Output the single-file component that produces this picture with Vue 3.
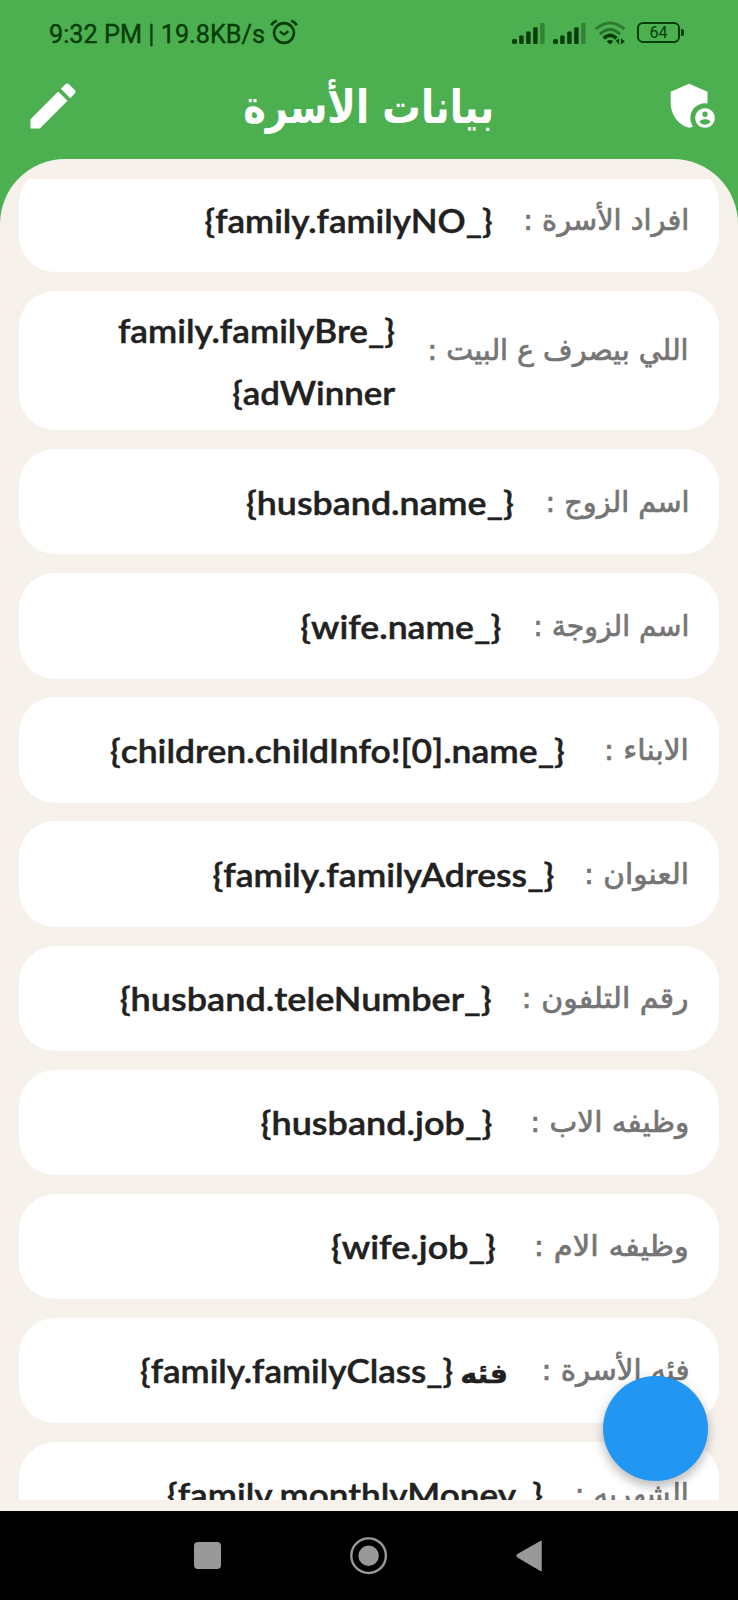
<script setup>
const rows = [
  { label: 'افراد الأسرة :', lw: 166, gap: 30, lines: [{ t: '{_family.familyNO}', w: 288 }] },
  { label: 'اللي بيصرف ع البيت :', lw: 261, gap: 33, tall: true, lines: [{ t: '{_family.familyBre', w: 277 }, { t: 'adWinner}', w: 163 }] },
  { label: 'اسم الزوج :', lw: 144, gap: 31, lines: [{ t: '{_husband.name}', w: 268 }] },
  { label: 'اسم الزوجة :', lw: 156, gap: 32, lines: [{ t: '{_wife.name}', w: 201 }] },
  { label: 'الابناء :', lw: 85, gap: 39, lines: [{ t: '{_children.childInfo![0].name}', w: 455 }] },
  { label: 'العنوان :', lw: 105, gap: 30, lines: [{ t: '{_family.familyAdress}', w: 342 }] },
  { label: 'رقم التلفون :', lw: 167, gap: 30, lines: [{ t: '{_husband.teleNumber}', w: 372 }] },
  { label: 'وظيفه الاب :', lw: 159, gap: 38, lines: [{ t: '{_husband.job}', w: 232 }] },
  { label: 'وظيفه الام :', lw: 155, gap: 38, lines: [{ t: '{_wife.job}', w: 165 }] },
  { label: 'فئه الأسرة :', lw: 148, gap: 33, lines: [{ prefix: 'فئه', t: '{_family.familyClass}', w: 368 }] },
  { label: 'الشهريه :', lw: 114, gap: 32, lines: [{ t: '{_family.monthlyMoney}', w: 376 }] },
]

// Scales a text run horizontally so that it fills its column exactly.
const vFit = {
  mounted(el, { value }) {
    const natural = el.getBoundingClientRect().width
    if (natural) el.style.transform = `scaleX(${value / natural})`
  },
}
</script>

<template>
  <div class="screen">
    <header class="top">
      <div class="status">
        <div class="status-left">
          <span class="clock"><span v-fit="216" class="fit ltr">9:32 PM | 19.8KB/s</span></span>
          <svg class="alarm" width="28" height="26" viewBox="0 0 28 26" fill="none" stroke="#083c0b">
            <circle cx="14" cy="14" r="9.9" stroke-width="2.6" />
            <path d="M1.4 6.4Q2.8 3.2 6.8 1.8M26.6 6.4Q25.2 3.2 21.2 1.8" stroke-width="2.6" />
            <path d="M9.8 12.4 13.8 15.6 18.4 12.2" stroke-width="2.4" />
          </svg>
        </div>
        <div class="status-right">
          <svg v-for="n in 2" :key="n" class="bars" width="33" height="22" viewBox="0 0 33 22" fill="#083c0b">
            <rect x="0" y="16" width="5" height="5" rx="1.8" />
            <rect x="7.2" y="12.4" width="4.4" height="8.6" rx="1" />
            <rect x="14.2" y="8.6" width="4.4" height="12.4" rx="1" />
            <rect x="21.2" y="4.2" width="4.4" height="16.8" rx="1" />
            <rect x="28.2" y="0" width="4.4" height="21" rx="1" opacity=".38" />
          </svg>
          <svg class="wifi" width="33" height="25" viewBox="0 0 33 25" fill="none" stroke="#083c0b">
            <path d="M1.5 8.2Q16 -4.2 30.5 8.2" stroke-width="3" opacity=".45" />
            <path d="M6 13.2Q16 3.8 26 13.2" stroke-width="3" opacity=".55" />
            <path d="M9.8 17.4Q16 11.2 22.4 17.4" stroke-width="3.6" />
            <path d="M12.6 20.2Q16 17.6 19.4 20.2L16 23.4Z" fill="#083c0b" stroke="none" />
            <path d="M25.2 17.2V23.4L21.6 19.8ZM27 17.2V23.4L30.8 20.6Z" fill="#083c0b" stroke="none" />
          </svg>
          <div class="battery"><span class="cell">64</span><i class="tip"></i></div>
        </div>
      </div>
      <div class="bar">
        <svg class="pencil" width="60" height="60" viewBox="0 0 24 24" fill="#fff">
          <path d="M3 17.25V21h3.75L17.81 9.94l-3.75-3.75L3 17.25zM20.71 7.04c.39-.39.39-1.02 0-1.41l-2.34-2.34c-.39-.39-1.02-.39-1.41 0l-1.83 1.83 3.75 3.75 1.83-1.83z" />
        </svg>
        <h1 class="title"><span v-fit="251" class="fit">بيانات الأسرة</span></h1>
        <svg class="shield" width="49" height="49" viewBox="2.5 1.5 20 20" fill="#fff">
          <path fill-rule="evenodd" d="M17 11c.34 0 .67.04 1 .09V6.27L10.5 3 3 6.27v4.91c0 4.54 3.2 8.79 7.5 9.82.55-.13 1.08-.32 1.6-.55-.69-.98-1.1-2.17-1.1-3.45 0-3.31 2.69-6 6-6zM17 13c-2.21 0-4 1.79-4 4s1.79 4 4 4 4-1.79 4-4-1.79-4-4-4zm0 1.38c.62 0 1.12.51 1.12 1.12s-.51 1.12-1.12 1.12-1.12-.51-1.12-1.12.5-1.12 1.12-1.12zm0 5.37c-.93 0-1.74-.46-2.24-1.17.05-.72 1.51-1.08 2.24-1.08s2.19.36 2.24 1.08c-.5.71-1.31 1.17-2.24 1.17z" />
        </svg>
      </div>
    </header>

    <main class="panel">
      <div class="list">
        <section v-for="row in rows" :key="row.label" class="card" :class="{ tall: row.tall }">
          <div class="label" :style="{ width: row.lw + 'px', marginLeft: row.gap + 'px' }">
            <span v-fit="row.lw" class="fit">{{ row.label }}</span>
          </div>
          <div class="value">
            <div v-for="line in row.lines" :key="line.t" class="line">
              <span v-fit="line.w" class="fit"><span v-if="line.prefix" class="prefix">{{ line.prefix }}&nbsp;</span>{{ line.t }}</span>
            </div>
          </div>
        </section>
      </div>
      <button class="fab"></button>
    </main>

    <nav class="nav">
      <svg width="738" height="89" viewBox="0 0 738 89" fill="#999">
        <rect x="194" y="31" width="27" height="27" rx="4" />
        <circle cx="368.6" cy="44.7" r="17.3" fill="none" stroke="#999" stroke-width="2.4" />
        <circle cx="368.6" cy="44.7" r="10.2" />
        <path d="M541.2 30V60L517.4 46Q515.8 44.7 517.4 43.5Z" stroke="#999" stroke-linejoin="round" />
      </svg>
    </nav>
  </div>
</template>

<style>
html,
body {
  margin: 0;
  background: #4caf50;
}
</style>

<style scoped>
.screen {
  width: 738px;
  height: 1600px;
  display: flex;
  flex-direction: column;
  overflow: hidden;
  background: #4caf50;
  font-family: Lato, "DejaVu Sans", sans-serif;
}
.fit {
  display: inline-block;
  white-space: nowrap;
  transform-origin: right center;
}
.fit.ltr {
  transform-origin: left center;
}
.top {
  height: 159px;
  flex: none;
}
.status {
  height: 68px;
  display: flex;
  justify-content: space-between;
  color: #083c0b;
}
.status-left,
.status-right {
  display: flex;
  align-items: flex-start;
}
.status-left {
  padding-left: 49px;
}
.clock {
  width: 216px;
  margin-top: 20px;
  font: 400 25px/30px Roboto, sans-serif;
  -webkit-text-stroke: .35px #083c0b;
}
.alarm {
  margin: 19px 0 0 5px;
}
.status-right {
  padding-right: 54px;
}
.bars {
  margin: 23px 8px 0 0;
}
.wifi {
  margin: 21px 10px 0 0;
}
.battery {
  display: flex;
  align-items: center;
  margin-top: 22px;
}
.cell {
  box-sizing: border-box;
  width: 43px;
  height: 21px;
  border: 2px solid #083c0b;
  border-radius: 6px;
  font: 400 16px/18px Roboto, sans-serif;
  text-align: center;
}
.tip {
  width: 3px;
  height: 7px;
  margin-left: 1px;
  border-radius: 0 2px 2px 0;
  background: #083c0b;
}
.bar {
  display: flex;
  align-items: flex-start;
}
.pencil {
  flex: none;
  margin: 8px 0 0 23px;
}
.title {
  direction: rtl;
  flex: none;
  width: 251px;
  margin: 3px 175px 0 160px;
  color: #fff;
  font: 700 46px/72px "DejaVu Sans", sans-serif;
}
.shield {
  flex: none;
  margin: 12px 0 0;
  width: 50px;
  overflow: visible;
}
.panel {
  position: relative;
  box-sizing: border-box;
  height: 1352px;
  padding: 19.5px 19px 11px;
  border-radius: 65px 65px 0 0;
  background: #f6f1eb;
}
.list {
  height: 1321.5px;
  overflow: hidden;
}
.card {
  box-sizing: border-box;
  direction: rtl;
  display: flex;
  align-items: flex-start;
  height: 105.3px;
  margin-bottom: 18.8px;
  padding-right: 30px;
  border-radius: 36px;
  background: #fff;
}
.card:first-child {
  margin-top: -11.5px;
}
.card.tall {
  height: 139.3px;
}
.label {
  flex: none;
  height: 60px;
  margin-top: 22.5px;
  color: #757575;
  font: 400 29px/60px "DejaVu Sans", sans-serif;
  -webkit-text-stroke: .7px #757575;
}
.tall .label {
  margin-top: 28.5px;
}
.value {
  margin-top: 21.5px;
  color: #212121;
  font: 600 33px/62px Lato, "DejaVu Sans", sans-serif;
  -webkit-text-stroke: .45px #212121;
}
.tall .value {
  margin-top: 8px;
}
.line {
  height: 62px;
}
.prefix {
  font-size: 27px;
  line-height: 1;
}
.fab {
  position: absolute;
  right: 30px;
  bottom: 30px;
  width: 105px;
  height: 105px;
  padding: 0;
  border: 0;
  border-radius: 50%;
  background: #2196f3;
  box-shadow: 0 6px 10px rgba(0, 0, 0, .2), 0 2px 16px rgba(0, 0, 0, .1);
}
.nav {
  height: 89px;
  background: #000;
}
.nav svg {
  display: block;
}
</style>
